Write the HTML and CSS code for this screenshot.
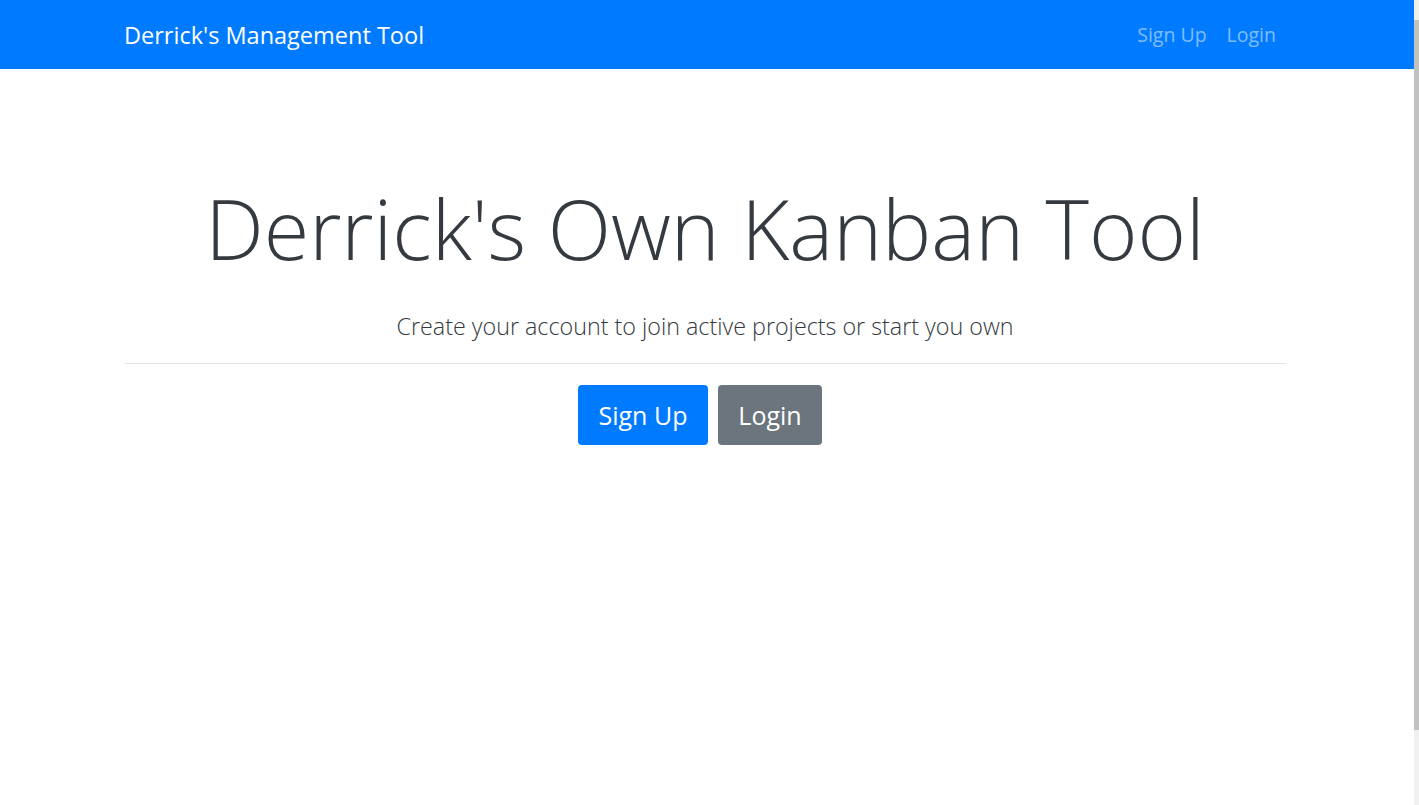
FILE: index.html
```html
<!DOCTYPE html>
<html lang="en">
<head>
<meta charset="utf-8">
<title>Derrick's Management Tool</title>
<link rel="stylesheet" href="styles.css">
</head>
<body>
<div class="page">
  <nav class="navbar">
    <div class="container nav-inner">
      <a class="brand" href="#">Derrick's Management Tool</a>
      <ul class="nav-links">
        <li><a href="#">Sign Up</a></li>
        <li><a href="#">Login</a></li>
      </ul>
    </div>
  </nav>
  <main class="container jumbo">
    <h1 class="display">Derrick's Own Kanban Tool</h1>
    <p class="lead">Create your account to join active projects or start you own</p>
    <hr class="divider">
    <div class="actions">
      <a class="btn btn-primary" href="#">Sign Up</a>
      <a class="btn btn-secondary" href="#">Login</a>
    </div>
  </main>
</div>
<div class="scrollbar"><div class="thumb"></div></div>
</body>
</html>
```

FILE: styles.css
```css
* { box-sizing: border-box; }
html, body { margin: 0; padding: 0; background: #fff; }
body {
  font-family: "Open Sans", "Noto Sans", "Liberation Sans", sans-serif;
  color: #212529;
  overflow: hidden;
}
.page { margin-right: 5px; }
.container {
  width: 1162px;
  margin: 0 0 0 calc(50% - 583px);
}
.navbar {
  background: #007bff;
  height: 69px;
}
.nav-inner {
  height: 100%;
  display: flex;
  align-items: center;
  justify-content: space-between;
}
.brand {
  color: #fff;
  text-decoration: none;
  font-size: 23.5px;
  line-height: 30px;
  margin-top: 1px;
}
.nav-links {
  list-style: none;
  display: flex;
  margin: 0;
  padding: 0;
}
.nav-links a {
  display: block;
  color: rgba(255, 255, 255, 0.5);
  text-decoration: none;
  font-size: 19.5px;
  padding: 0 10px;
  line-height: 26px;
}
.jumbo {
  padding-top: 104px;
  text-align: center;
}
.display {
  margin: 0;
  font-size: 82.8px;
  font-weight: 300;
  line-height: 110px;
  color: #343a40;
}
.lead {
  margin: 28px 0 0;
  font-size: 23.3px;
  font-weight: 300;
  line-height: 30px;
  color: #343a40;
}
.divider {
  margin: 22px 0 21px;
  border: 0;
  border-top: 1px solid #e5e5e5;
}
.actions {
  display: flex;
  justify-content: center;
  gap: 10px;
  padding-right: 10px;
}
.btn {
  display: inline-flex;
  align-items: center;
  justify-content: center;
  height: 60px;
  border-radius: 4px;
  color: #fff;
  text-decoration: none;
  font-size: 25px;
}
.btn-primary { background: #007bff; width: 130px; }
.btn-secondary { background: #6c757d; width: 104px; }
.scrollbar {
  position: fixed;
  top: 0;
  right: 0;
  width: 5px;
  height: 100%;
  background: #f0f0f0;
}
.thumb {
  margin-top: 20px;
  height: 710px;
  background: #c1c1c1;
}
```
